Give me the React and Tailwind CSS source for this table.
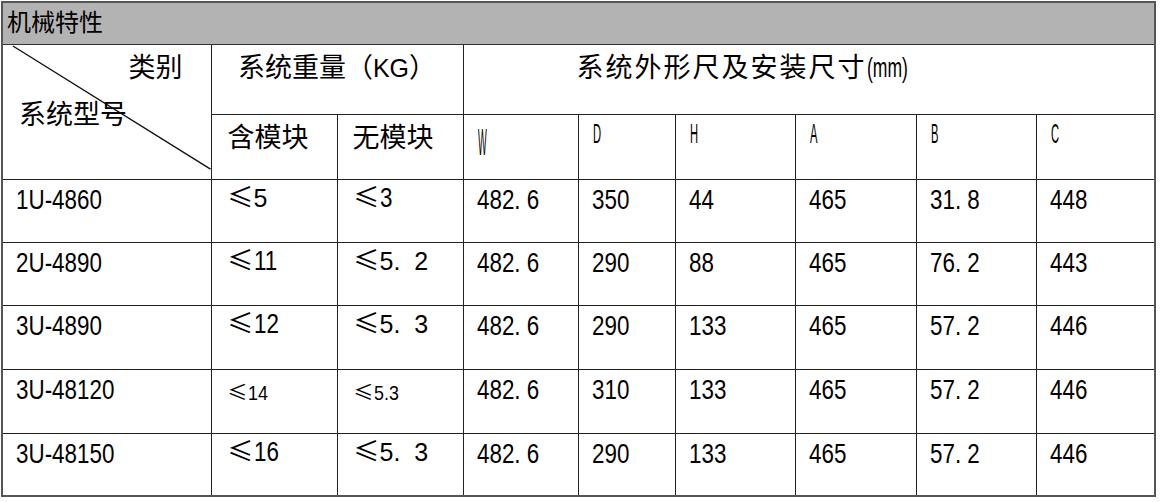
import React from "react";

const cjk = "font-['Noto_Sans_CJK_SC',sans-serif]";
const latin = "font-['Liberation_Sans',sans-serif]";

// column widths, left to right
const cols = [209, 126, 126, 115, 97, 120, 121, 120, 119];

const rows = [
  {
    model: "1U-4860",
    withMod: { text: "5", kind: "wide" },
    noMod: { text: "3", kind: "narrow" },
    dims: ["482. 6", "350", "44", "465", "31. 8", "448"],
    h: "h-[63px]",
  },
  {
    model: "2U-4890",
    withMod: { text: "11", kind: "narrow" },
    noMod: { text: "5.  2", kind: "wide" },
    dims: ["482. 6", "290", "88", "465", "76. 2", "443"],
    h: "h-[63px]",
  },
  {
    model: "3U-4890",
    withMod: { text: "12", kind: "narrow" },
    noMod: { text: "5.  3", kind: "wide" },
    dims: ["482. 6", "290", "133", "465", "57. 2", "446"],
    h: "h-[64px]",
  },
  {
    model: "3U-48120",
    withMod: { text: "14", kind: "small" },
    noMod: { text: "5.3", kind: "small" },
    dims: ["482. 6", "310", "133", "465", "57. 2", "446"],
    h: "h-[64px]",
  },
  {
    model: "3U-48150",
    withMod: { text: "16", kind: "narrow" },
    noMod: { text: "5.  3", kind: "wide" },
    dims: ["482. 6", "290", "133", "465", "57. 2", "446"],
    h: "h-[63px]",
  },
];

// condensed digits: Liberation Sans squeezed sideways
function Narrow({ children, className = "" }) {
  return (
    <span className={`${latin} inline-block origin-left scale-x-[0.8] whitespace-pre ${className}`}>
      {children}
    </span>
  );
}

function LessEq({ value }) {
  if (value.kind === "small") {
    return (
      <div className="flex items-baseline pt-[12px] leading-none">
        <span className={`${cjk} text-[20px]`}>≤</span>
        <Narrow className="text-[21px] scale-x-[0.85]">{value.text}</Narrow>
      </div>
    );
  }
  return (
    <div className="flex items-baseline pt-[3px] leading-none">
      <span className={`${cjk} text-[26px]`}>≤</span>
      {value.kind === "wide" ? (
        <span className={`${latin} text-[25px] whitespace-pre`}>{value.text}</span>
      ) : (
        <Narrow className="text-[28px]">{value.text}</Narrow>
      )}
    </div>
  );
}

const letters = [
  { t: "W", cls: "text-[37px] scale-x-[0.25] mt-[4px]" },
  { t: "D", cls: "scale-x-[0.4]" },
  { t: "H", cls: "scale-x-[0.4]" },
  { t: "A", cls: "scale-x-[0.4]" },
  { t: "B", cls: "scale-x-[0.4]" },
  { t: "C", cls: "scale-x-[0.4]" },
];

export default function App() {
  const cell = "border border-[#222] align-top p-0";

  return (
    <div className="min-h-screen bg-white pl-[1px] pt-[1px] text-black">
      <table className="table-fixed border-collapse border-2 border-[#555] w-[1154px]">
        <colgroup>
          {cols.map((w, i) => (
            <col key={i} style={{ width: w }} />
          ))}
        </colgroup>
        <tbody>
          <tr className="h-[42px]">
            <td colSpan={9} className="border border-[#333] bg-[#b3b3b3] align-middle pl-[4px] p-0">
              <span className={`${cjk} text-[24px] leading-none`}>机械特性</span>
            </td>
          </tr>

          <tr className="h-[70px]">
            <td rowSpan={2} className={`${cell} relative`}>
              <svg className="absolute inset-0 h-full w-full" viewBox="0 0 209 135" preserveAspectRatio="none">
                <line x1="10" y1="1" x2="209" y2="125" stroke="#111" strokeWidth="1.4" />
              </svg>
              <div className={`${cjk} relative flex flex-col leading-none text-[27px]`}>
                <span className="self-end pr-[28px] pt-[7px]">类别</span>
                <span className="pl-[16px] mt-[20px]">系统型号</span>
              </div>
            </td>
            <td colSpan={2} className={`${cell} text-center`}>
              <div className={`${cjk} pt-[7px] text-[27px] leading-none`}>
                系统重量（<span className={`${latin} text-[25px]`}>KG</span>）
              </div>
            </td>
            <td colSpan={6} className={cell}>
              <div className={`${cjk} pl-[113px] pt-[7px] text-[27px] leading-none`}>
                <span className="tracking-[2px]">系统外形尺及安装尺寸</span>
                <Narrow className="text-[27px] scale-x-[0.65]">(mm)</Narrow>
              </div>
            </td>
          </tr>

          <tr className="h-[65px]">
            <td className={cell}>
              <div className={`${cjk} pl-[16px] pt-[7px] text-[27px] leading-none`}>含模块</div>
            </td>
            <td className={cell}>
              <div className={`${cjk} pl-[15px] pt-[7px] text-[27px] leading-none`}>无模块</div>
            </td>
            {letters.map((l) => (
              <td key={l.t} className={cell}>
                <div className={`${latin} pl-[14px] pt-[5px] text-[28px] leading-none`}>
                  <span className={`inline-block origin-top-left ${l.cls}`}>{l.t}</span>
                </div>
              </td>
            ))}
          </tr>

          {rows.map((r) => (
            <tr key={r.model} className={r.h}>
              <td className={cell}>
                <div className="pl-[13px] pt-[4px] text-[28px] leading-none">
                  <Narrow>{r.model}</Narrow>
                </div>
              </td>
              <td className={cell}>
                <div className="pl-[16px]">
                  <LessEq value={r.withMod} />
                </div>
              </td>
              <td className={cell}>
                <div className="pl-[16px]">
                  <LessEq value={r.noMod} />
                </div>
              </td>
              {r.dims.map((d, i) => (
                <td key={i} className={cell}>
                  <div className="pl-[13px] pt-[4px] text-[28px] leading-none">
                    <Narrow>{d}</Narrow>
                  </div>
                </td>
              ))}
            </tr>
          ))}
        </tbody>
      </table>
    </div>
  );
}
